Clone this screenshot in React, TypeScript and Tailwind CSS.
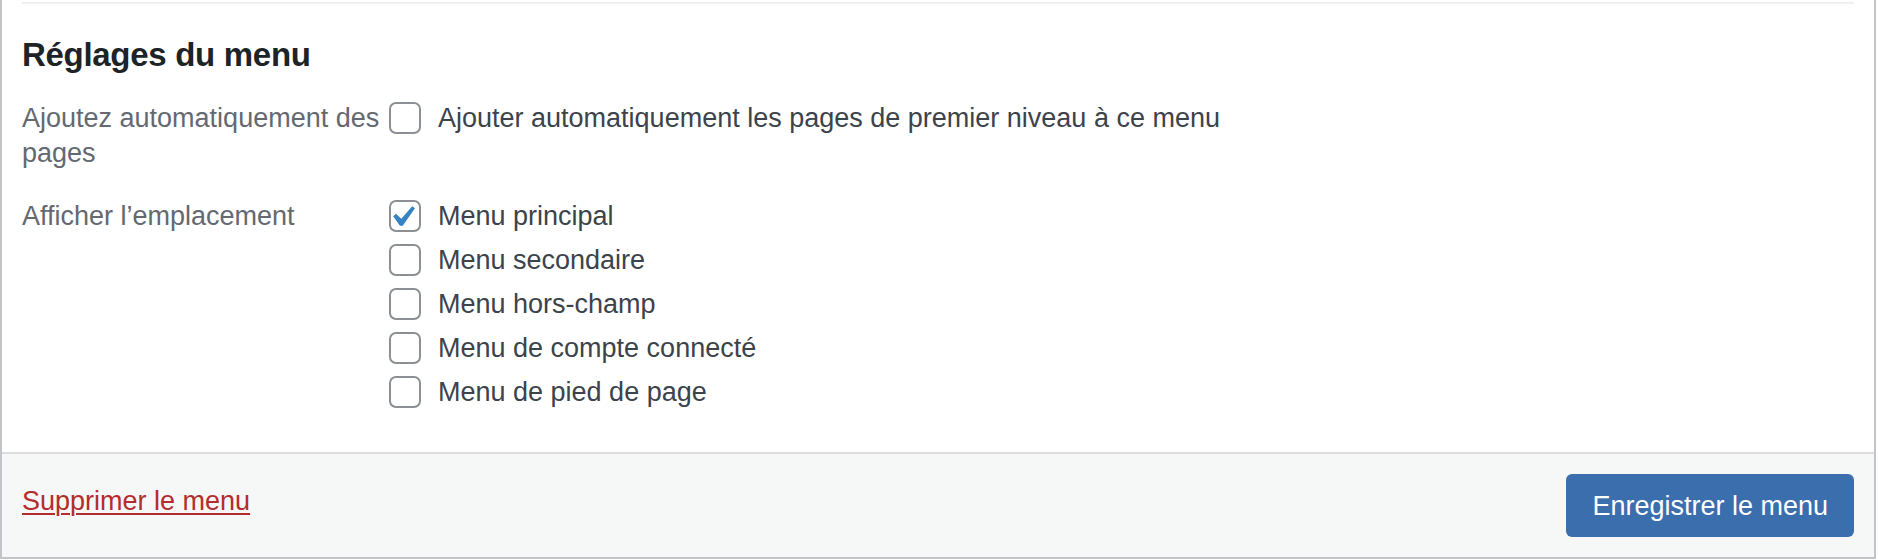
const font = { fontFamily: '"Liberation Sans", Arial, sans-serif' };

const locations = [
  { label: 'Menu principal', checked: true },
  { label: 'Menu secondaire', checked: false },
  { label: 'Menu hors-champ', checked: false },
  { label: 'Menu de compte connecté', checked: false },
  { label: 'Menu de pied de page', checked: false },
];

function Checkbox({ checked }: { checked?: boolean }) {
  return (
    <span className="relative block w-8 h-8 shrink-0 rounded-[7px] border-2 border-[#8c8f94] bg-white">
      {checked && (
        <svg
          viewBox="0 0 20 20"
          className="absolute left-[-10px] top-[-6px] w-[42px] h-[42px]"
        >
          <path
            d="M14.83 4.89l1.34.94-5.81 8.38H9.02L5.78 9.67l1.34-1.25 2.57 2.4z"
            fill="#3582c4"
          />
        </svg>
      )}
    </span>
  );
}

function CheckRow({ label, checked }: { label: string; checked?: boolean }) {
  return (
    <label className="flex items-center h-8">
      <Checkbox checked={checked} />
      <span className="ml-[17px] text-[27px] leading-8 text-[#3c434a] whitespace-nowrap">
        {label}
      </span>
    </label>
  );
}

export default function App() {
  return (
    <div className="w-[1878px] h-[560px] bg-white" style={font}>
      <div className="w-[1876px] h-[559px] flex flex-col border-x-2 border-b-2 border-[#c3c4c7] bg-white">
        <div className="px-[20px] pb-[44px]">
          <div className="mt-[2px] h-[2px] bg-[#f0f0f1]" />

          <h3 className="mt-[31px] text-[33px] leading-[40px] font-bold tracking-[-0.3px] text-[#1d2327]">
            Réglages du menu
          </h3>

          {/* groupe : pages automatiques */}
          <div className="mt-[26px] flex items-start">
            <div className="w-[367px] shrink-0 text-[27px] leading-[35px] text-[#646970] whitespace-nowrap">
              Ajoutez automatiquement des
              <br />
              pages
            </div>
            <div className="pt-px">
              <CheckRow label="Ajouter automatiquement les pages de premier niveau à ce menu" />
            </div>
          </div>

          {/* groupe : emplacements */}
          <div className="mt-[28px] flex items-start">
            <div className="w-[367px] shrink-0 text-[27px] leading-[35px] text-[#646970] whitespace-nowrap">
              Afficher l’emplacement
            </div>
            <div className="pt-px flex flex-col gap-3">
              {locations.map((loc) => (
                <CheckRow key={loc.label} label={loc.label} checked={loc.checked} />
              ))}
            </div>
          </div>
        </div>

        <div className="flex-1 flex items-start justify-between border-t-2 border-[#dcdcde] bg-[#f6f7f7] px-[20px] pt-[20px]">
          <a
            href="#"
            className="mt-[7px] text-[27px] leading-[40px] text-[#b32d2e] underline decoration-2 underline-offset-[3px]"
          >
            Supprimer le menu
          </a>
          <button className="h-[63px] px-[26px] pt-[2px] rounded-[6px] bg-[#3b6ead] text-[27px] text-white whitespace-nowrap">
            Enregistrer le menu
          </button>
        </div>
      </div>
    </div>
  );
}
